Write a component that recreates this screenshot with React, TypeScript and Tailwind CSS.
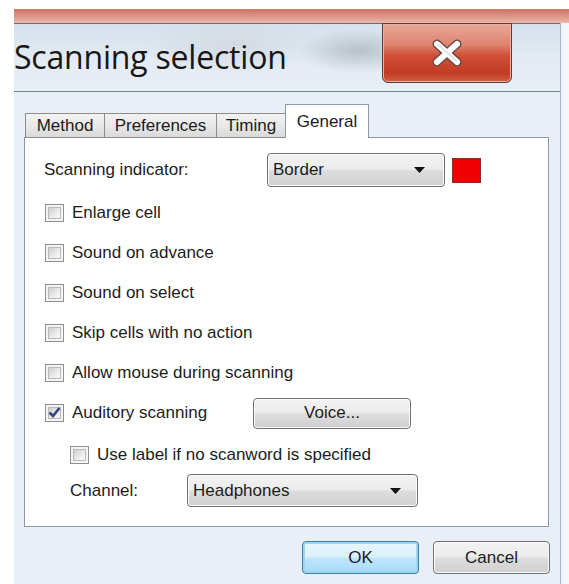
import React from "react";

const FONT = "font-['Liberation_Sans',Arial,sans-serif]";

function CloseGlyph() {
  return (
    <svg width="30" height="28" viewBox="0 0 30 28">
      <path
        d="M5 4 L15 11 L25 4 M5 24 L15 17 L25 24 M5 4 L25 24 M25 4 L5 24"
        stroke="#5b3a34"
        strokeWidth="9"
        strokeLinecap="round"
        strokeLinejoin="round"
        fill="none"
        opacity="0"
      />
      <path d="M5 5 L25 23 M25 5 L5 23" stroke="#6a4a44" strokeWidth="9" strokeLinecap="round" fill="none" />
      <path d="M5 5 L25 23 M25 5 L5 23" stroke="#ffffff" strokeWidth="6" strokeLinecap="round" fill="none" />
      <path d="M6 5.5 L24 21.5" stroke="#e4e4e4" strokeWidth="2" strokeLinecap="round" fill="none" />
    </svg>
  );
}

function Arrow() {
  return (
    <svg width="11" height="6" viewBox="0 0 11 6">
      <path d="M0 0 H11 L5.5 6 Z" fill="#111" />
    </svg>
  );
}

function Box({ checked = false }: { checked?: boolean }) {
  return (
    <div className="w-[19px] h-[18px] shrink-0 border border-[#8e8f8f] bg-[#f4f4f4] p-[2px]">
      <div className="relative w-full h-full border border-[#b9b9b9] bg-[linear-gradient(135deg,#cfcfcf,#ececec_60%,#fafafa)]">
        {checked && (
          <svg className="absolute -left-[2px] -top-[3px]" width="15" height="15" viewBox="0 0 15 15">
            <path d="M2.5 7.5 L6 11 L12.5 3" stroke="#34477e" strokeWidth="2.6" fill="none" />
          </svg>
        )}
      </div>
    </div>
  );
}

function CheckRow({ label, checked = false }: { label: string; checked?: boolean }) {
  return (
    <div className="h-[40px] flex items-center ml-[1px] gap-[8px]">
      <Box checked={checked} />
      <span>{label}</span>
    </div>
  );
}

function Combo({ value, width, arrowGap }: { value: string; width: string; arrowGap: string }) {
  return (
    <div
      className={`${width} h-full flex items-center justify-between rounded-[4px] border border-[#707070] bg-[linear-gradient(180deg,#f3f3f3,#ebebeb_48%,#dddddd_52%,#d1d1d1)] pl-[5px] ${arrowGap} shadow-[inset_0_0_0_1px_#fbfbfb]`}
    >
      <span>{value}</span>
      <Arrow />
    </div>
  );
}

function PushButton({ label, primary = false, width }: { label: string; primary?: boolean; width: string }) {
  return (
    <div
      className={`${width} h-full flex items-center justify-center rounded-[4px] border ${
        primary
          ? "border-[#3c7fb1] bg-[linear-gradient(180deg,#eaf6fd,#d9f0fc_48%,#bee6fd_52%,#a7d9f5)] shadow-[inset_0_0_0_2px_#9fd3f0]"
          : "border-[#707070] bg-[linear-gradient(180deg,#f3f3f3,#ebebeb_48%,#dddddd_52%,#cfcfcf)] shadow-[inset_0_0_0_1px_#fcfcfc]"
      }`}
    >
      {label}
    </div>
  );
}

function Tab({ label, width, active = false, first = false }: { label: string; width: string; active?: boolean; first?: boolean }) {
  if (active) {
    return (
      <div
        className={`${width} h-[34px] -ml-[1px] flex justify-center pt-[4px] border border-b-0 border-[#8c99a5] bg-white relative z-[2]`}
      >
        {label}
      </div>
    );
  }
  return (
    <div
      className={`${width} h-[25px] ${first ? "" : "-ml-[1px]"} flex items-center justify-center border border-[#8d8d8d] bg-[linear-gradient(180deg,#f2f2f2,#e8e8e8_50%,#dadada)]`}
    >
      {label}
    </div>
  );
}

export default function App() {
  return (
    <div className={`w-[569px] h-[584px] bg-white overflow-hidden flex flex-col text-[17px] text-[#1c1c1c] ${FONT}`}>
      <div className="h-[9px] shrink-0" />
      {/* background window peeking above */}
      <div className="ml-[14px] h-[14px] shrink-0 bg-[linear-gradient(180deg,#cf7663,#dd9a8a_60%,#e9b8ad)] blur-[0.5px]" />

      <div className="flex flex-1">
        <div className="w-[14px] shrink-0 bg-white" />

        <div className="w-[546px] flex flex-col">
          {/* title bar */}
          <div className="h-[69px] shrink-0 flex items-start border-t border-b border-t-[#6c6c6c] border-b-[#6f8194] bg-[radial-gradient(ellipse_60px_22px_at_63%_40%,#b8c0c8,transparent),radial-gradient(ellipse_90px_30px_at_40%_30%,#d3dae2,transparent),linear-gradient(180deg,#d7e1ec,#e4ebf3_60%,#e8eef6)]">
            <div className="pt-[11px] leading-[44px] text-[32px] text-[#171717] font-['Open_Sans',sans-serif] tracking-[-0.2px]">
              Scanning selection
            </div>
            <div className="ml-auto mr-[48px] -mt-[1px] w-[130px] h-[60px] flex items-center justify-center rounded-b-[6px] border border-[#5e3b33] bg-[linear-gradient(180deg,#e9a797,#df8570_35%,#cf4f36_55%,#c23c24_85%,#d45f43)] shadow-[inset_0_0_0_1px_#eab1a3]">
              <CloseGlyph />
            </div>
          </div>

          {/* client area */}
          <div className="flex-1 flex flex-col bg-[#e9eff7] pl-[10px] pt-[12px]">
            <div className="h-[34px] flex items-end ml-[1px] -mb-[1px] relative z-[1]">
              <Tab label="Method" width="w-[80px]" first />
              <Tab label="Preferences" width="w-[113px]" />
              <Tab label="Timing" width="w-[70px]" />
              <Tab label="General" width="w-[84px]" active />
            </div>

            <div className="w-[525px] h-[390px] shrink-0 border border-[#8c99a5] bg-white pl-[19px] pt-[15px] flex flex-col">
              <div className="h-[34px] flex items-center">
                <span className="w-[223px] shrink-0">Scanning indicator:</span>
                <Combo value="Border" width="w-[178px]" arrowGap="pr-[19px]" />
                <div className="ml-[7px] w-[29px] h-[25px] border border-[#8a2a2a] bg-[#f00000]" />
              </div>

              <div className="h-[6px]" />
              <CheckRow label="Enlarge cell" />
              <CheckRow label="Sound on advance" />
              <CheckRow label="Sound on select" />
              <CheckRow label="Skip cells with no action" />
              <CheckRow label="Allow mouse during scanning" />

              <div className="h-[40px] flex items-center">
                <div className="w-[208px] shrink-0 flex items-center gap-[8px] ml-[1px]">
                  <Box checked />
                  <span>Auditory scanning</span>
                </div>
                <div className="h-[31px]">
                  <PushButton label="Voice..." width="w-[158px]" />
                </div>
              </div>

              <div className="h-[38px] mt-[3px] flex items-center gap-[8px] ml-[26px]">
                <Box />
                <span>Use label if no scanword is specified</span>
              </div>

              <div className="h-[33px] flex items-center ml-[26px]">
                <span className="w-[117px] shrink-0">Channel:</span>
                <Combo value="Headphones" width="w-[231px]" arrowGap="pr-[16px]" />
              </div>
            </div>

            <div className="h-[33px] mt-[14px] flex justify-start pl-[278px] gap-[14px]">
              <PushButton label="OK" primary width="w-[117px]" />
              <PushButton label="Cancel" width="w-[117px]" />
            </div>
          </div>
        </div>

        <div className="flex-1 border-l border-[#a7b6c6] bg-[linear-gradient(90deg,#eef2f7,#f7f7f7)]" />
      </div>
    </div>
  );
}
